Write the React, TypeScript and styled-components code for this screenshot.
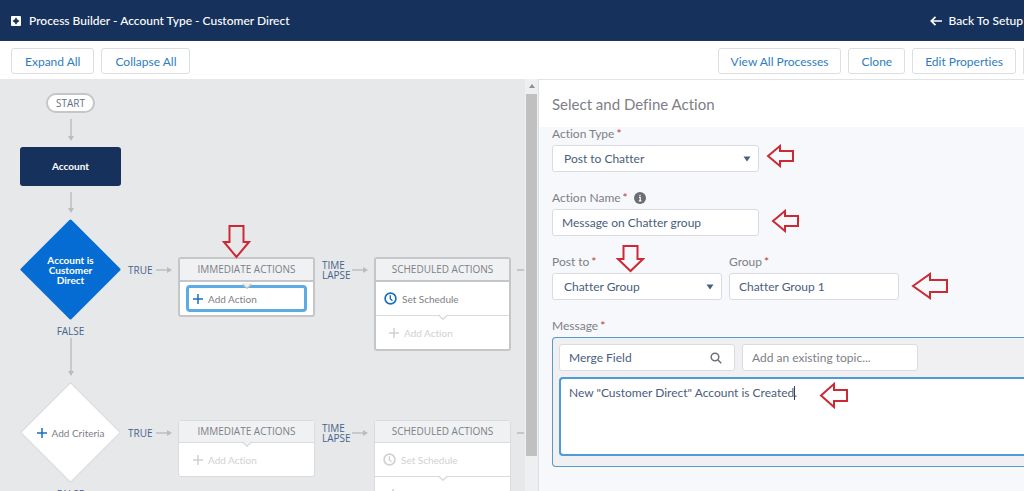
import React from 'react';
import styled, { createGlobalStyle, css } from 'styled-components';

const color = {
  navy: '#16325c',
  link: '#2f7dc0',
  text: '#4a5d7c',
  muted: '#7d8086',
  line: '#c4c6c8',
  faintLine: '#d9dbdd',
  faintText: '#d0d1d3',
  canvas: '#e6e8ea',
  red: '#cb2a35',
};

const GlobalStyle = createGlobalStyle`
  *, *::before, *::after { box-sizing: border-box; }
  body {
    margin: 0;
    overflow: hidden;
    font-family: Lato, "Liberation Sans", sans-serif;
    font-size: 12px;
    font-variant-ligatures: none;
    color: ${color.text};
  }
  button, input, select, textarea {
    font: inherit;
    font-variant-ligatures: none;
    color: inherit;
    margin: 0;
  }
`;

const Page = styled.div`
  display: flex;
  flex-direction: column;
  height: 100vh;
  overflow: hidden;
  background: #fff;
`;

/* ---------- Header ---------- */

const Header = styled.header`
  display: flex;
  align-items: center;
  justify-content: space-between;
  flex: none;
  height: 41px;
  padding: 2px 1px 0 11px;
  background: ${color.navy};
  border-bottom: 1px solid #23344f;
  color: #fff;
`;

const Title = styled.h1`
  display: flex;
  align-items: center;
  gap: 8px;
  margin: 0;
  font-size: 12px;
  font-weight: 500;
  line-height: 16px;
`;

const BackLink = styled.a`
  display: flex;
  align-items: center;
  gap: 7px;
  color: #fff;
  font-weight: 500;
  line-height: 16px;
  text-decoration: none;
`;

/* ---------- Toolbar ---------- */

const Toolbar = styled.div`
  display: flex;
  align-items: center;
  justify-content: space-between;
  flex: none;
  height: 38px;
  padding: 2px 0 0 11px;
`;

const ButtonGroup = styled.div`
  display: flex;
  gap: 7px;
`;

const ToolButton = styled.button<{ $wide?: boolean }>`
  height: 26px;
  padding: 0 ${(p) => (p.$wide ? 13 : 12)}px;
  border: 1px solid #dcdee2;
  border-radius: 3px;
  background: #fff;
  color: ${color.link};
  white-space: nowrap;
`;

const GroupEdge = styled.span`
  width: 1px;
  background: #dcdee2;
`;

const Workspace = styled.main`
  display: flex;
  flex: 1;
  min-height: 0;
`;

/* ---------- Process diagram ---------- */

const Canvas = styled.section`
  position: relative;
  flex: 1;
  min-width: 0;
  overflow: hidden;
  padding: 14px 0 0 20px;
  background: ${color.canvas};
`;

const Spine = styled.div`
  display: flex;
  flex-direction: column;
  align-items: center;
  flex: none;
  width: 101px;
`;

const StartPill = styled.div`
  width: 49px;
  border: 2px solid ${color.line};
  border-radius: 10px;
  background: #fff;
  color: #5d6f86;
  font: 10px/16px "Open Sans", sans-serif;
  text-align: center;
`;

const DownLine = styled.svg`
  display: block;
  flex: none;
  margin: 6px 0;
`;

const ObjectNode = styled.button`
  width: 100%;
  height: 39px;
  padding: 0 0 1px;
  border: 0;
  border-radius: 3px;
  background: ${color.navy};
  color: #fff;
  font-size: 10px;
  font-weight: 700;
`;

const Step = styled.div`
  display: flex;
`;

const DiamondButton = styled.button`
  display: grid;
  place-items: center;
  width: 101px;
  height: 101px;
  padding: 0;
  border: 0;
  background: none;

  > * { grid-area: 1 / 1; }
`;

const CriteriaName = styled.span`
  width: 60px;
  color: #fff;
  font-size: 10px;
  font-weight: 700;
  line-height: 10px;
`;

const AddCriteria = styled.span`
  display: flex;
  align-items: center;
  gap: 5px;
  color: ${color.muted};
  font-size: 10px;
`;

const flowLabel = css`
  color: #47648c;
  font-family: "Open Sans", sans-serif;
  font-size: 10px;
  line-height: 10px;
`;

const FalseLabel = styled.span`
  ${flowLabel}
  margin-top: 4px;
  line-height: 14px;
`;

const FalseLine = styled(DownLine)`
  margin: 0 0 6px;
`;

const Branch = styled.div`
  display: flex;
  align-items: flex-start;
  padding: 38px 0 0 7px;
`;

const BranchLabel = styled.span<{ $width: number }>`
  ${flowLabel}
  display: flex;
  align-items: center;
  flex: none;
  width: ${(p) => p.$width}px;
  height: 26px;
`;

const RightLine = styled.svg`
  display: block;
  flex: none;
  margin: 8px 6px 0 2px;
`;

const Dash = styled.span`
  flex: none;
  width: 7px;
  height: 2px;
  margin: 12px 0 0 6px;
  background: ${color.line};
`;

const Card = styled.div<{ $faint?: boolean }>`
  flex: none;
  width: 137px;
  margin-right: 7px;
  border: ${(p) => (p.$faint ? `1px solid ${color.faintLine}` : `2px solid ${color.line}`)};
  border-radius: 3px;
  background: #fff;

  &:last-of-type { margin-right: 0; }
`;

const CardTitle = styled.h2<{ $faint?: boolean }>`
  margin: 0;
  border-bottom: ${(p) => (p.$faint ? `1px solid ${color.faintLine}` : `2px solid ${color.line}`)};
  background: #f0f1f3;
  color: ${color.muted};
  font: 10px/21px "Open Sans", sans-serif;
  text-align: center;
`;

const CardRow = styled.div`
  position: relative;

  & + & { border-top: 1px solid ${color.faintLine}; }
`;

const Notch = styled.svg`
  position: absolute;
  top: -2px;
  left: 50%;
  margin-left: -5px;
`;

const RowButton = styled.button<{ $disabled?: boolean; $indent: number }>`
  display: flex;
  align-items: center;
  gap: 5px;
  width: 100%;
  height: 33px;
  padding: 0 0 0 ${(p) => p.$indent}px;
  border: 0;
  background: none;
  color: ${(p) => (p.$disabled ? color.faintText : color.muted)};
  font-size: 10px;
`;

const FocusedAction = styled(RowButton)`
  width: 121px;
  height: 27px;
  margin: 3px 6px;
  border: 3px solid #5dabe5;
  border-radius: 4px;
`;

/* ---------- Scrollbar ---------- */

const ScrollTrack = styled.div`
  display: flex;
  flex-direction: column;
  align-items: center;
  flex: none;
  width: 13px;
  padding-bottom: 35px;
  background: #eeeff0;
`;

const ScrollArrow = styled.svg`
  flex: none;
  margin: 5px 0 6px;
`;

const ScrollThumb = styled.div`
  flex: 1;
  width: 11px;
  background: #c0c0c0;
`;

/* ---------- Action panel ---------- */

const Panel = styled.aside`
  flex: none;
  width: 486px;
  border-top: 1px solid #e2e3e5;
  border-left: 1px solid #dcdde0;
  background: #f7f8fb;
`;

const PanelTitle = styled.h2`
  margin: 0;
  padding: 1px 13px 0;
  background: #fff;
  color: ${color.muted};
  font-size: 15px;
  font-weight: 400;
  line-height: 46px;
`;

const Form = styled.form`
  position: relative;
  display: flex;
  flex-direction: column;
  gap: 19px;
  padding-left: 13px;
`;

const FieldRow = styled.div`
  display: flex;
  gap: 7px;
`;

const Field = styled.div<{ $width?: number }>`
  display: flex;
  flex-direction: column;
  gap: 4px;
  width: ${(p) => (p.$width ? `${p.$width}px` : 'auto')};
`;

const Label = styled.label`
  display: flex;
  align-items: center;
  gap: 2px;
  color: ${color.muted};
  line-height: 14px;
`;

const Required = styled.span`
  color: #c23934;
  line-height: 14px;
`;

const InfoIcon = styled.svg`
  margin-left: 4px;
`;

const boxed = css`
  width: 100%;
  border: 1px solid #dadce1;
  border-radius: 3px;
  background: #fff;
  outline: 0;
`;

const TextInput = styled.input`
  ${boxed}
  height: 27px;
  padding: 0 9px;

  &::placeholder { color: ${color.muted}; opacity: 1; }
`;

const SelectWrap = styled.div`
  position: relative;
`;

const SelectBox = styled.select`
  ${boxed}
  display: block;
  height: 27px;
  padding: 0 24px 0 11px;
  appearance: none;
`;

const InputIcon = styled.svg<{ $right: number }>`
  position: absolute;
  top: 50%;
  right: ${(p) => p.$right}px;
  transform: translateY(-50%);
  pointer-events: none;
`;

const Editor = styled.div`
  display: flex;
  flex-direction: column;
  gap: 6px;
  height: 130px;
  padding: 6px 0 10px 6px;
  border: 1px solid #5a9bc6;
  border-right: 0;
  border-radius: 4px 0 0 4px;
  background: #f0f0f2;
`;

const EditorTools = styled.div`
  display: flex;
  gap: 7px;
`;

const EditorTool = styled.div`
  position: relative;
  width: 176px;
`;

const MessageWrap = styled.div`
  position: relative;
  flex: 1;
  display: flex;
`;

const MessageBox = styled.textarea`
  ${boxed}
  height: 100%;
  padding: 6px 8px;
  border: 2px solid #4d9bd8;
  border-right: 0;
  border-radius: 4px 0 0 4px;
  line-height: 16px;
  resize: none;
`;

const Caret = styled.span`
  position: absolute;
  top: 9px;
  left: 235px;
  width: 1px;
  height: 14px;
  background: #33415c;
`;

/* ---------- Tutorial pointers laid over the screen ---------- */

const Pointer = styled.svg<{ $left: number; $top: number }>`
  position: absolute;
  left: ${(p) => p.$left}px;
  top: ${(p) => p.$top}px;
  fill: none;
  stroke: ${color.red};
  stroke-width: 2;
  pointer-events: none;
`;

function LeftPointer({ left, top, width = 28, height = 24 }: { left: number; top: number; width?: number; height?: number }) {
  const neck = Math.round(width / 2);
  const inset = Math.round(height / 4);
  return (
    <Pointer $left={left} $top={top} width={width} height={height} aria-hidden="true">
      <path
        d={`M2 ${height / 2} L${neck} 2 V${inset + 1} H${width - 1} V${height - inset - 1} H${neck} V${height - 2} Z`}
      />
    </Pointer>
  );
}

function DownPointer({ left, top, height }: { left: number; top: number; height: number }) {
  const neck = height / 2;
  return (
    <Pointer $left={left} $top={top} width="29" height={height} aria-hidden="true">
      <path d={`M14.5 ${height - 2} L2 ${neck} H7.5 V1 H21.5 V${neck} H27 Z`} />
    </Pointer>
  );
}

/* ---------- Diagram drawings ---------- */

function PlusIcon({ stroke }: { stroke: string }) {
  return (
    <svg width="10" height="10" stroke={stroke} strokeWidth="1.5" aria-hidden="true">
      <path d="M5 0V10M0 5H10" />
    </svg>
  );
}

function ClockIcon({ stroke }: { stroke: string }) {
  return (
    <svg width="13" height="13" fill="none" stroke={stroke} strokeWidth="1.7" aria-hidden="true">
      <circle cx="6.5" cy="6.5" r="5.4" />
      <path d="M6.3 3.2V6.7L8.4 8.8" strokeWidth="1.4" />
    </svg>
  );
}

function DiamondShape({ fill, stroke }: { fill: string; stroke: string }) {
  return (
    <svg width="101" height="101" aria-hidden="true">
      <path d="M50.5 2 L99 50.5 L50.5 99 L2 50.5 Z" fill={fill} stroke={stroke} strokeWidth="3" strokeLinejoin="round" />
      <path d="M50.5 2 L99 50.5 L50.5 99 L2 50.5 Z" fill={fill} stroke={fill} strokeLinejoin="round" />
    </svg>
  );
}

function Down({ length, as: Line = DownLine }: { length: number; as?: typeof DownLine }) {
  return (
    <Line width="8" height={length} aria-hidden="true">
      <path d={`M4 0V${length - 3}`} stroke="#babcbe" strokeWidth="1.4" />
      <path d={`M1 ${length - 5}H7L4 ${length}Z`} fill="#babcbe" />
    </Line>
  );
}

function Right() {
  return (
    <RightLine width="16" height="10" aria-hidden="true">
      <path d="M0 5H13" stroke="#babcbe" strokeWidth="1.4" />
      <path d="M11 2V8L16 5Z" fill="#babcbe" />
    </RightLine>
  );
}

function CardNotch({ fill, stroke }: { fill: string; stroke: string }) {
  return (
    <Notch width="10" height="7" aria-hidden="true">
      <path d="M1 0V1L5 5L9 1V0Z" fill={fill} />
      <path d="M0.5 1L5 5.3L9.5 1" fill="none" stroke={stroke} strokeWidth="1.4" />
    </Notch>
  );
}

function BranchCards({ active }: { active?: boolean }) {
  const faint = !active;
  return (
    <Branch>
      <BranchLabel $width={26}>TRUE</BranchLabel>
      <Right />
      <Card $faint={faint}>
        <CardTitle $faint={faint}>IMMEDIATE ACTIONS</CardTitle>
        <CardRow>
          {active ? (
            <FocusedAction type="button" $indent={4}>
              <PlusIcon stroke="#1b6fbd" />
              Add Action
            </FocusedAction>
          ) : (
            <RowButton type="button" $disabled $indent={14}>
              <PlusIcon stroke={color.faintText} />
              Add Action
            </RowButton>
          )}
          <CardNotch fill="#f0f1f3" stroke={active ? color.line : color.faintLine} />
        </CardRow>
      </Card>
      <BranchLabel $width={28}>
        TIME
        <br />
        LAPSE
      </BranchLabel>
      <Right />
      <Card $faint={faint}>
        <CardTitle $faint={faint}>SCHEDULED ACTIONS</CardTitle>
        <CardRow>
          <RowButton type="button" $disabled={faint} $indent={8}>
            <ClockIcon stroke={active ? '#1b6fbd' : color.faintText} />
            Set Schedule
          </RowButton>
        </CardRow>
        <CardRow>
          <RowButton type="button" $disabled $indent={13}>
            <PlusIcon stroke={color.faintText} />
            Add Action
          </RowButton>
          <CardNotch fill="#fff" stroke={color.faintLine} />
        </CardRow>
      </Card>
      <Dash />
    </Branch>
  );
}

/* ---------- Form parts ---------- */

function Star() {
  return <Required aria-hidden="true">*</Required>;
}

function SelectField({ id, label, value, width }: { id: string; label: string; value: string; width: number }) {
  return (
    <Field $width={width}>
      <Label htmlFor={id}>
        {label}
        <Star />
      </Label>
      <SelectWrap>
        <SelectBox id={id} defaultValue={value}>
          <option>{value}</option>
        </SelectBox>
        <InputIcon $right={8} width="8" height="6" aria-hidden="true">
          <path d="M0.5 0.5H7.5L4 5.5Z" fill="#47607f" />
        </InputIcon>
      </SelectWrap>
    </Field>
  );
}

export default function App() {
  return (
    <Page>
      <GlobalStyle />
      <Header>
        <Title>
          <svg width="10" height="10" aria-hidden="true">
            <rect width="10" height="10" rx="1" fill="#fff" />
            <path
              d="M5 1.8L6.2 3.8L8.2 5L6.2 6.2L5 8.2L3.8 6.2L1.8 5L3.8 3.8Z"
              fill={color.navy}
              stroke={color.navy}
              strokeWidth="0.6"
            />
          </svg>
          Process Builder - Account Type - Customer Direct
        </Title>
        <BackLink href="#setup">
          <svg width="12" height="10" fill="none" stroke="#fff" strokeWidth="1.7" aria-hidden="true">
            <path d="M12 5H1.5M5.5 0.8L1.3 5L5.5 9.2" />
          </svg>
          Back To Setup
        </BackLink>
      </Header>

      <Toolbar>
        <ButtonGroup>
          <ToolButton type="button" $wide>Expand All</ToolButton>
          <ToolButton type="button" $wide>Collapse All</ToolButton>
        </ButtonGroup>
        <ButtonGroup>
          <ToolButton type="button">View All Processes</ToolButton>
          <ToolButton type="button">Clone</ToolButton>
          <ToolButton type="button">Edit Properties</ToolButton>
          <GroupEdge />
        </ButtonGroup>
      </Toolbar>

      <Workspace>
        <Canvas>
          <Spine>
            <StartPill>START</StartPill>
            <Down length={22} />
            <ObjectNode type="button">Account</ObjectNode>
            <Down length={21} />
          </Spine>

          <Step>
            <Spine>
              <DiamondButton type="button">
                <DiamondShape fill="#056cd3" stroke="#056cd3" />
                <CriteriaName>Account is Customer Direct</CriteriaName>
              </DiamondButton>
              <FalseLabel>FALSE</FalseLabel>
              <Down length={38} as={FalseLine} />
            </Spine>
            <BranchCards active />
          </Step>

          <Step>
            <Spine>
              <DiamondButton type="button">
                <DiamondShape fill="#fff" stroke={color.faintLine} />
                <AddCriteria>
                  <PlusIcon stroke="#1b6fbd" />
                  Add Criteria
                </AddCriteria>
              </DiamondButton>
              <FalseLabel>FALSE</FalseLabel>
            </Spine>
            <BranchCards />
          </Step>

          <DownPointer left={222} top={146} height={34} />
        </Canvas>

        <ScrollTrack aria-hidden="true">
          <ScrollArrow width="6" height="4">
            <path d="M0 4L3 0L6 4Z" fill="#8d8f92" />
          </ScrollArrow>
          <ScrollThumb />
        </ScrollTrack>

        <Panel>
          <PanelTitle>Select and Define Action</PanelTitle>
          <Form>
            <SelectField id="action-type" label="Action Type" value="Post to Chatter" width={207} />

            <Field $width={207}>
              <Label htmlFor="action-name">
                Action Name
                <Star />
                <InfoIcon width="12" height="12" aria-hidden="true">
                  <circle cx="6" cy="6" r="6" fill="#6b6d71" />
                  <path d="M5 5.4H6.2V8.6M4.8 8.8H7.4M5.4 3.4H6.6" stroke="#fff" strokeWidth="1.2" fill="none" />
                </InfoIcon>
              </Label>
              <TextInput id="action-name" type="text" defaultValue="Message on Chatter group" />
            </Field>

            <FieldRow>
              <SelectField id="post-to" label="Post to" value="Chatter Group" width={170} />
              <Field $width={170}>
                <Label htmlFor="group">
                  Group
                  <Star />
                </Label>
                <TextInput id="group" type="text" defaultValue="Chatter Group 1" />
              </Field>
            </FieldRow>

            <Field>
              <Label htmlFor="message">
                Message
                <Star />
              </Label>
              <Editor>
                <EditorTools>
                  <EditorTool>
                    <TextInput type="text" aria-label="Merge Field" defaultValue="Merge Field" />
                    <InputIcon
                      $right={13}
                      width="12"
                      height="12"
                      fill="none"
                      stroke="#6d7077"
                      strokeWidth="1.5"
                      aria-hidden="true"
                    >
                      <circle cx="5" cy="5" r="3.8" />
                      <path d="M7.8 7.8L11.2 11.2" />
                    </InputIcon>
                  </EditorTool>
                  <EditorTool>
                    <TextInput type="text" aria-label="Topic" placeholder="Add an existing topic..." />
                  </EditorTool>
                </EditorTools>
                <MessageWrap>
                  <MessageBox id="message" defaultValue={'New "Customer Direct" Account is Created.'} />
                  <Caret />
                </MessageWrap>
              </Editor>
            </Field>

            <LeftPointer left={227} top={17} />
            <LeftPointer left={232} top={82} />
            <LeftPointer left={372} top={145} width={37} height={28} />
            <LeftPointer left={280} top={255} width={29} height={27} />
            <DownPointer left={77} top={118} height={28} />
          </Form>
        </Panel>
      </Workspace>
    </Page>
  );
}
